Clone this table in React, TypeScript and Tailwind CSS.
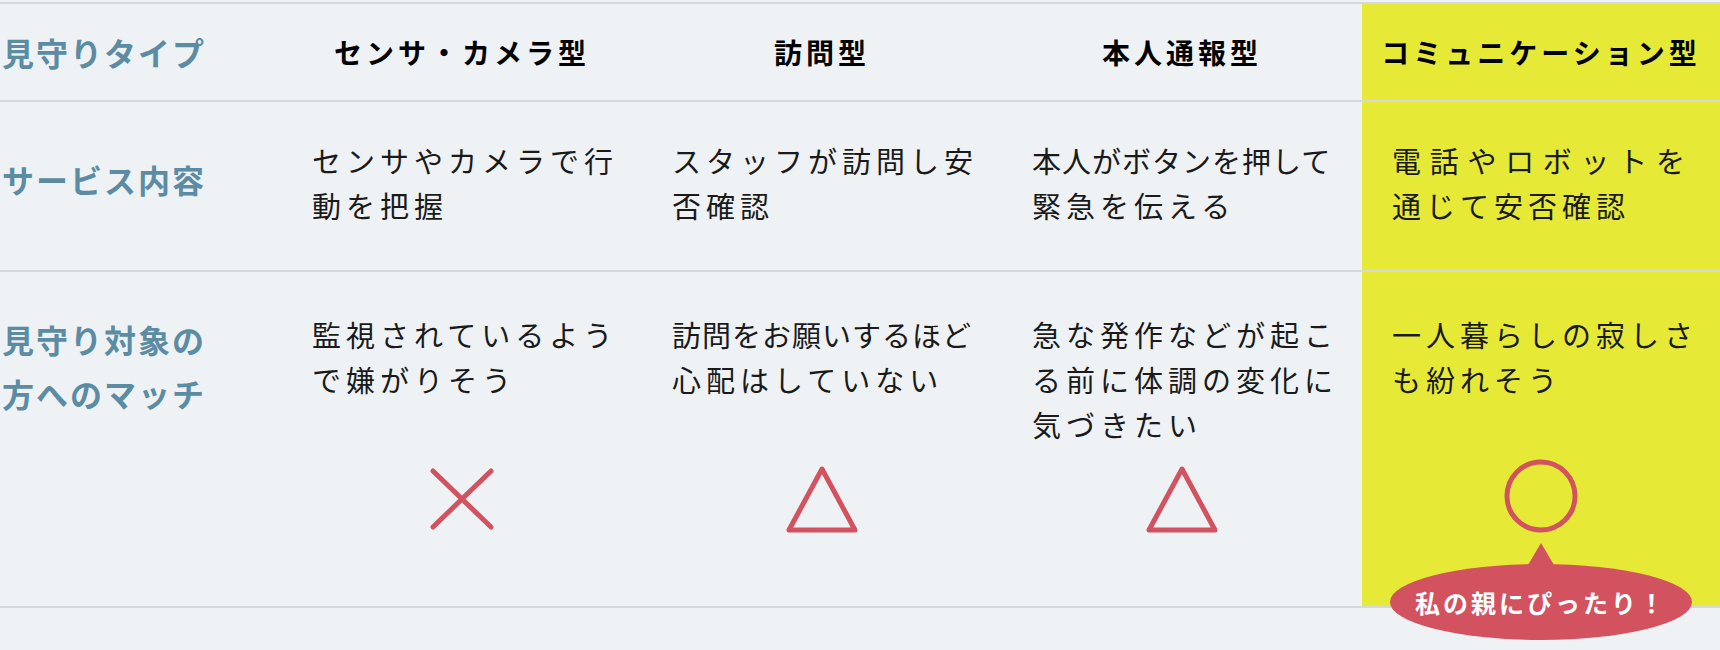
import React from 'react';

type Mark = 'cross' | 'triangle' | 'circle';

interface Column {
  type: string;
  service: string[];
  match: string[];
  mark: Mark;
  highlight?: boolean;
}

const columns: Column[] = [
  {
    type: 'センサ・カメラ型',
    service: ['センサやカメラで行', '動を把握'],
    match: ['監視されているよう', 'で嫌がりそう'],
    mark: 'cross',
  },
  {
    type: '訪問型',
    service: ['スタッフが訪問し安', '否確認'],
    match: ['訪問をお願いするほど', '心配はしていない'],
    mark: 'triangle',
  },
  {
    type: '本人通報型',
    service: ['本人がボタンを押して', '緊急を伝える'],
    match: ['急な発作などが起こ', 'る前に体調の変化に', '気づきたい'],
    mark: 'triangle',
  },
  {
    type: 'コミュニケーション型',
    service: ['電話やロボットを', '通じて安否確認'],
    match: ['一人暮らしの寂しさ', 'も紛れそう'],
    mark: 'circle',
    highlight: true,
  },
];

const font = 'font-["Noto_Sans_CJK_JP","Noto_Sans",sans-serif]';

// 10文字の行は詰めて列幅に収める
const lineCls = (line: string, justify: boolean) =>
  `whitespace-nowrap ${line.length >= 10 ? 'tracking-[1px]' : 'tracking-[5px]'} ${
    justify ? '[text-align-last:justify]' : ''
  }`;

function MarkIcon({ mark }: { mark: Mark }) {
  if (mark === 'cross') {
    return (
      <svg width="70" height="70" viewBox="0 0 70 70" fill="none">
        <path d="M6 7 L64 63 M64 7 L6 63" stroke="#d3525f" strokeWidth="5" strokeLinecap="round" />
      </svg>
    );
  }
  if (mark === 'triangle') {
    return (
      <svg width="74" height="70" viewBox="0 0 74 70" fill="none">
        <polygon points="37,5 4,66 70,66" stroke="#d3525f" strokeWidth="5" strokeLinejoin="round" />
      </svg>
    );
  }
  return (
    <svg width="76" height="76" viewBox="0 0 76 76" fill="none">
      <circle cx="38" cy="38" r="34" stroke="#d3525f" strokeWidth="5" />
    </svg>
  );
}

function Bubble() {
  return (
    <div className="absolute left-1/2 top-[calc(100%+9px)] -translate-x-1/2 flex flex-col items-center">
      <svg width="26" height="22" viewBox="0 0 26 22" className="-mb-px">
        <polygon points="13,0 0,22 26,22" fill="#d3525f" />
      </svg>
      <div className="w-[302px] h-[76px] rounded-[50%] bg-[#d3525f] flex items-center justify-center">
        <span className="text-white font-bold text-[25px] tracking-[3px] leading-none">
          私の親にぴったり！
        </span>
      </div>
    </div>
  );
}

export default function App() {
  const rowCls = 'grid grid-cols-[282px_360px_360px_360px_358px] border-b-2 border-[#d6d9dc]';
  const labelCls = 'pl-[2px] text-[#5b8ca3] font-bold text-[32px] tracking-[2px]';

  return (
    <div className={`w-[1720px] h-[650px] overflow-hidden bg-[#eef2f5] pt-[2px] ${font}`}>
      <div className="border-t-2 border-[#d6d9dc]">
        {/* 見守りタイプ */}
        <div className={rowCls}>
          <div className={`h-[96px] flex items-center ${labelCls}`}>見守りタイプ</div>
          {columns.map((c) => (
            <div
              key={c.type}
              className={`h-[96px] flex items-center justify-center font-bold text-[28px] tracking-[4px] text-black ${
                c.highlight ? 'bg-[#e6ea36]' : ''
              }`}
            >
              {c.type}
            </div>
          ))}
        </div>

        {/* サービス内容 */}
        <div className={rowCls}>
          <div className={`h-[168px] flex items-center pb-[14px] ${labelCls}`}>サービス内容</div>
          {columns.map((c) => (
            <div
              key={c.type}
              className={`h-[168px] flex flex-col justify-center pb-[6px] px-[30px] text-[29px] leading-[45px] text-[#1a1a1a] ${
                c.highlight ? 'bg-[#e6ea36]' : ''
              }`}
            >
              {c.service.map((line, i) => (
                <div key={i} className={lineCls(line, !!c.highlight && i === 0)}>
                  {line}
                </div>
              ))}
            </div>
          ))}
        </div>

        {/* 見守り対象の方へのマッチ */}
        <div className={rowCls}>
          <div className={`h-[334px] pt-[40px] leading-[54px] ${labelCls}`}>
            見守り対象の
            <br />
            方へのマッチ
          </div>
          {columns.map((c) => (
            <div
              key={c.type}
              className={`h-[334px] flex flex-col pt-[40px] pb-[72px] px-[30px] text-[29px] leading-[45px] text-[#1a1a1a] ${
                c.highlight ? 'bg-[#e6ea36]' : ''
              }`}
            >
              {c.match.map((line, i) => (
                <div key={i} className={lineCls(line, false)}>
                  {line}
                </div>
              ))}
              <div className="mt-auto flex justify-center">
                <div className="relative">
                  <MarkIcon mark={c.mark} />
                  {c.mark === 'circle' && <Bubble />}
                </div>
              </div>
            </div>
          ))}
        </div>
      </div>
    </div>
  );
}
